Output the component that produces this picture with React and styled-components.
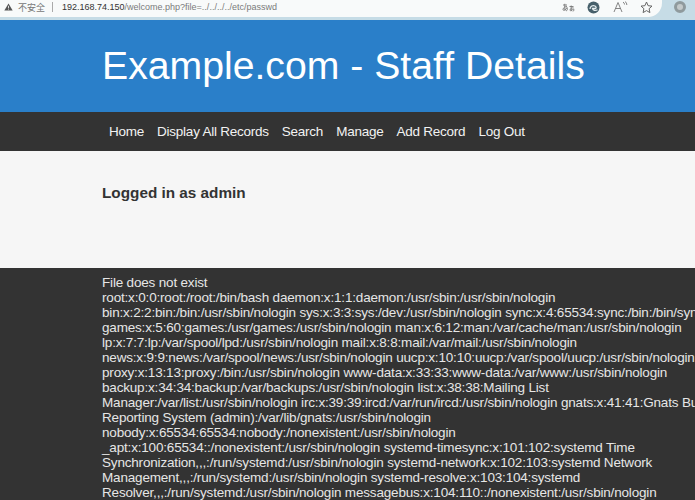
import React from "react";
import styled, { createGlobalStyle } from "styled-components";

const GlobalStyle = createGlobalStyle`
  html, body {
    margin: 0;
    padding: 0;
    height: 500px;
    overflow: hidden;
    background: #333;
    font-family: "Liberation Sans", Arial, sans-serif;
  }
`;

const Page = styled.div`
  width: 695px;
  height: 500px;
  overflow: hidden;
  display: flex;
  flex-direction: column;
`;

const BrowserBar = styled.div`
  height: 20px;
  display: flex;
  align-items: flex-start;
  background: #c6dce6;
  flex: none;
`;

const AddressBox = styled.div`
  width: 662px;
  height: 17px;
  display: flex;
  align-items: center;
  background: #f8fafa;
  border-radius: 0 0 14px 0;
  font-size: 9px;
  padding: 0 0 3px 4px;
  box-sizing: border-box;
`;

const Warning = styled.span`
  color: #777;
  font-family: "Noto Sans CJK SC", sans-serif;
  margin-left: 5px;
`;

const Divider = styled.span`
  width: 1px;
  height: 10px;
  background: #aaa;
  margin: 0 9px 0 7px;
`;

const Host = styled.span`
  color: #333;
`;

const Path = styled.span`
  color: #7a7a7a;
`;

const Tools = styled.div`
  margin-left: auto;
  display: flex;
  align-items: center;
  gap: 12.5px;
  padding-right: 9px;
  color: #666;
`;

const Banner = styled.header`
  height: 92px;
  background: #2a7fc9;
  padding-left: 102px;
  display: flex;
  align-items: center;
  flex: none;
`;

const Title = styled.h1`
  margin: 0;
  font-size: 39.2px;
  font-weight: 400;
  color: #fff;
  white-space: nowrap;
`;

const Nav = styled.nav`
  height: 39px;
  background: #333;
  padding-left: 109px;
  display: flex;
  align-items: center;
  gap: 13px;
  flex: none;
`;

const NavLink = styled.a`
  color: #f2f2f2;
  font-size: 13.5px;
  letter-spacing: -0.24px;
  white-space: nowrap;
`;

const Welcome = styled.section`
  height: 117px;
  background: #f6f6f6;
  padding: 33px 0 0 102px;
  box-sizing: border-box;
  flex: none;
`;

const Heading = styled.h3`
  margin: 0;
  font-size: 15.3px;
  font-weight: 700;
  color: #333;
`;

const Output = styled.section`
  flex: 1;
  background: #333;
  padding: 7px 0 0 102px;
`;

const Line = styled.div`
  color: #e6e6e6;
  font-size: 13.5px;
  letter-spacing: -0.18px;
  line-height: 15px;
  white-space: nowrap;
`;

const lines = [
  "File does not exist",
  "root:x:0:0:root:/root:/bin/bash daemon:x:1:1:daemon:/usr/sbin:/usr/sbin/nologin",
  "bin:x:2:2:bin:/bin:/usr/sbin/nologin sys:x:3:3:sys:/dev:/usr/sbin/nologin sync:x:4:65534:sync:/bin:/bin/sync",
  "games:x:5:60:games:/usr/games:/usr/sbin/nologin man:x:6:12:man:/var/cache/man:/usr/sbin/nologin",
  "lp:x:7:7:lp:/var/spool/lpd:/usr/sbin/nologin mail:x:8:8:mail:/var/mail:/usr/sbin/nologin",
  "news:x:9:9:news:/var/spool/news:/usr/sbin/nologin uucp:x:10:10:uucp:/var/spool/uucp:/usr/sbin/nologin",
  "proxy:x:13:13:proxy:/bin:/usr/sbin/nologin www-data:x:33:33:www-data:/var/www:/usr/sbin/nologin",
  "backup:x:34:34:backup:/var/backups:/usr/sbin/nologin list:x:38:38:Mailing List",
  "Manager:/var/list:/usr/sbin/nologin irc:x:39:39:ircd:/var/run/ircd:/usr/sbin/nologin gnats:x:41:41:Gnats Bug-",
  "Reporting System (admin):/var/lib/gnats:/usr/sbin/nologin",
  "nobody:x:65534:65534:nobody:/nonexistent:/usr/sbin/nologin",
  "_apt:x:100:65534::/nonexistent:/usr/sbin/nologin systemd-timesync:x:101:102:systemd Time",
  "Synchronization,,,:/run/systemd:/usr/sbin/nologin systemd-network:x:102:103:systemd Network",
  "Management,,,:/run/systemd:/usr/sbin/nologin systemd-resolve:x:103:104:systemd",
  "Resolver,,,:/run/systemd:/usr/sbin/nologin messagebus:x:104:110::/nonexistent:/usr/sbin/nologin",
];

const navItems = ["Home", "Display All Records", "Search", "Manage", "Add Record", "Log Out"];

const WarnIcon = () => (
  <svg width="9" height="8" viewBox="0 0 11 10">
    <path d="M5.5 0.5 L10.7 9.5 H0.3 Z" fill="#555" />
    <rect x="5" y="3.5" width="1" height="3" fill="#fff" />
    <rect x="5" y="7.2" width="1" height="1" fill="#fff" />
  </svg>
);

const TranslateIcon = () => (
  <svg width="13" height="9" viewBox="0 0 13 9" fill="none" stroke="#777" strokeWidth="0.9">
    <path d="M1 2 H5 M2.8 0.8 C2.8 3.5 2.5 6 3.2 7.5 M5 3.5 C3.5 3.5 1 4.5 1 6.5 C1 8 3.5 7.5 5 4.5 C6 6 5 7.8 4 8" />
    <path d="M7.5 3.5 H11.5 M9.2 2.5 C9.2 4.5 9 6.5 9.5 7.8 M11.5 4.8 C10 4.8 8 5.5 8 7 C8 8.3 10 8 11.5 5.8 C12.3 7 11.6 8.2 10.8 8.4" />
  </svg>
);

const EdgeIcon = () => (
  <svg width="13" height="13" viewBox="0 0 13 13">
    <circle cx="6.5" cy="6.5" r="6" fill="#47606b" />
    <path d="M3 8 C3 5 6 4 8 5 C9.5 5.8 9.5 7.5 8 7.5 H5.5 C5.8 9.5 8.5 10 10.5 8.8" fill="none" stroke="#e6eef0" strokeWidth="1.3" />
  </svg>
);

const ReadAloudIcon = () => (
  <svg width="15" height="12" viewBox="0 0 15 12" fill="none" stroke="#777" strokeWidth="0.9">
    <path d="M1 11 L5 1.5 L9 11 M2.5 7.5 H7.5" />
    <path d="M10 1 C11 1.5 11.5 2.5 11.5 3.5 M12 0.5 C13.2 1.3 13.8 2.5 13.8 4" />
  </svg>
);

const StarIcon = () => (
  <svg width="13" height="13" viewBox="0 0 13 13" fill="none" stroke="#666" strokeWidth="1">
    <path d="M6.5 1 L8.1 4.7 L12 5.1 L9.1 7.7 L9.9 11.6 L6.5 9.6 L3.1 11.6 L3.9 7.7 L1 5.1 L4.9 4.7 Z" />
  </svg>
);

const ProfileDot = styled.span`
  width: 12px;
  height: 12px;
  margin: 1px 9px 0 auto;
  border-radius: 50%;
  background: #c3c9ca;
  box-sizing: border-box;
  border: 3px solid #8f9a9d;
`;

export default function App() {
  return (
    <Page>
      <GlobalStyle />
      <BrowserBar>
        <AddressBox>
          <WarnIcon />
          <Warning>不安全</Warning>
          <Divider />
          <Host>192.168.74.150</Host>
          <Path>/welcome.php?file=../../../../etc/passwd</Path>
          <Tools>
            <TranslateIcon />
            <EdgeIcon />
            <ReadAloudIcon />
            <StarIcon />
          </Tools>
        </AddressBox>
        <ProfileDot />
      </BrowserBar>
      <Banner>
        <Title>Example.com - Staff Details</Title>
      </Banner>
      <Nav>
        {navItems.map((item) => (
          <NavLink key={item}>{item}</NavLink>
        ))}
      </Nav>
      <Welcome>
        <Heading>Logged in as admin</Heading>
      </Welcome>
      <Output>
        {lines.map((line) => (
          <Line key={line}>{line}</Line>
        ))}
      </Output>
    </Page>
  );
}
